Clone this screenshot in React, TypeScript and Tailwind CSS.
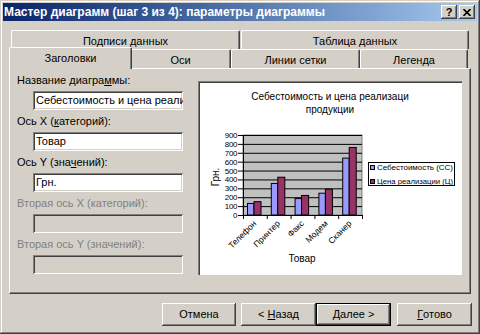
import React from 'react';

const raised =
  'bg-[#D4D0C8] shadow-[inset_-1px_-1px_0_#404040,inset_1px_1px_0_#ffffff,inset_-2px_-2px_0_#808080,inset_2px_2px_0_#D4D0C8]';
const sunken =
  'shadow-[inset_1px_1px_0_#808080,inset_-1px_-1px_0_#ffffff,inset_2px_2px_0_#404040,inset_-2px_-2px_0_#D4D0C8]';

function Tab({ w, label, selected }: { w: string; label: string; selected?: boolean }) {
  return (
    <div
      className={
        w +
        ' flex items-center justify-center border-l border-t border-white border-r border-r-[#404040] rounded-t-[2px] shadow-[inset_-1px_0_0_#808080] bg-[#D4D0C8] text-[11px] text-black ' +
        (selected ? 'h-[22px] -ml-[2px] -mr-[2px] -mb-[1px] relative z-10 pb-[1px]' : 'h-[19px] pt-[2px]')
      }
    >
      {label}
    </div>
  );
}

function Field({
  label,
  value,
  disabled,
}: {
  label: React.ReactNode;
  value?: string;
  disabled?: boolean;
}) {
  return (
    <div className="flex flex-col mb-[5px]">
      <div className={'h-[13px] leading-[13px] text-[11px] whitespace-nowrap ' + (disabled ? 'text-[#808080]' : 'text-black')}>
        {label}
      </div>
      <div
        className={
          'mt-[4px] ml-[16px] w-[150px] h-[19px] overflow-hidden whitespace-nowrap pl-[3px] text-[11px] leading-[19px] text-black ' +
          sunken +
          (disabled ? ' bg-[#D4D0C8]' : ' bg-white')
        }
      >
        {value}
      </div>
    </div>
  );
}

function Btn({ children, w, def }: { children: React.ReactNode; w: string; def?: boolean }) {
  if (def) {
    return (
      <div className={w + ' h-[23px] border border-black'}>
        <div className={'w-full h-full flex items-center justify-center text-[11px] text-black ' + raised}>{children}</div>
      </div>
    );
  }
  return <div className={w + ' h-[23px] flex items-center justify-center text-[11px] text-black ' + raised}>{children}</div>;
}

const cats = [
  { n: 'Телефон', a: 130, b: 150 },
  { n: 'Принтер', a: 355, b: 425 },
  { n: 'Факс', a: 185, b: 220 },
  { n: 'Модем', a: 245, b: 290 },
  { n: 'Сканер', a: 640, b: 760 },
];

function Chart() {
  const x0 = 243;
  const x1 = 362;
  const y0 = 215;
  const yTop = 135;
  const cw = (x1 - x0) / 5;
  const sy = (v: number) => y0 - (v * (y0 - yTop)) / 900;
  const ticks = [0, 100, 200, 300, 400, 500, 600, 700, 800, 900];
  return (
    <svg
      width={264}
      height={194}
      viewBox="198 81 264 194"
      className="block"
      style={{ fontFamily: "'Liberation Sans', Arial, sans-serif" }}
    >
      <text x={330} y={100} fontSize={10} textAnchor="middle" fill="#000">
        Себестоимость и цена реализаци
      </text>
      <text x={330} y={113} fontSize={10} textAnchor="middle" fill="#000">
        продукции
      </text>
      <rect x={x0} y={yTop} width={x1 - x0} height={y0 - yTop} fill="#C0C0C0" stroke="#808080" strokeWidth={1} />
      {ticks.map((t) => (
        <g key={t}>
          <line x1={x0 - 5} x2={x1} y1={sy(t) + 0.5} y2={sy(t) + 0.5} stroke="#000" strokeWidth={1} />
          <text x={237} y={sy(t) + 3} fontSize={8} textAnchor="end" fill="#000" letterSpacing={-0.4}>
            {t}
          </text>
        </g>
      ))}
      <line x1={x0 + 0.5} x2={x0 + 0.5} y1={yTop} y2={y0 + 1} stroke="#000" strokeWidth={1} />
      {[0, 1, 2, 3, 4, 5].map((i) => (
        <line key={i} x1={x0 + i * cw + 0.5} x2={x0 + i * cw + 0.5} y1={y0} y2={y0 + 4} stroke="#000" strokeWidth={1} />
      ))}
      {cats.map((c, i) => {
        const cx = x0 + i * cw;
        return (
          <g key={c.n}>
            <rect x={cx + 4.5} y={sy(c.a)} width={6.5} height={y0 - sy(c.a)} fill="#9999FF" stroke="#000" strokeWidth={1} />
            <rect x={cx + 11} y={sy(c.b)} width={7} height={y0 - sy(c.b)} fill="#993366" stroke="#000" strokeWidth={1} />
            <text
              transform={`translate(${cx + cw / 2 + 2} ${y0 + 9}) rotate(-45)`}
              fontSize={8.5}
              textAnchor="end"
              fill="#000"
            >
              {c.n}
            </text>
          </g>
        );
      })}
      <text transform="translate(219 177) rotate(-90)" fontSize={10} textAnchor="middle" fill="#000">
        Грн.
      </text>
      <text x={302} y={262} fontSize={10} textAnchor="middle" fill="#000">
        Товар
      </text>
      <rect x={368.5} y={162.5} width={86} height={23} fill="#fff" stroke="#000" strokeWidth={1} />
      <rect x={370.5} y={165.5} width={4} height={4} fill="#9999FF" stroke="#000" strokeWidth={1} />
      <rect x={370.5} y={179.5} width={4} height={4} fill="#993366" stroke="#000" strokeWidth={1} />
      <text x={377} y={170} fontSize={8} fill="#000" textLength={76} lengthAdjust="spacingAndGlyphs">
        Себестоимость (СС)
      </text>
      <text x={377} y={184} fontSize={8} fill="#000" textLength={76} lengthAdjust="spacingAndGlyphs">
        Цена реализации (Ц)
      </text>
    </svg>
  );
}

export default function App() {
  return (
    <div className="w-[480px] h-[334px] bg-[#D4D0C8] p-[3px] flex flex-col [font-family:'Liberation_Sans',Arial,sans-serif] shadow-[inset_-1px_-1px_0_#404040,inset_1px_1px_0_#D4D0C8,inset_-2px_-2px_0_#808080,inset_2px_2px_0_#ffffff] overflow-hidden">
      {/* Title bar */}
      <div className="h-[18px] flex items-center bg-linear-to-r from-[#0A246A] to-[#A6CAF0] pl-[1px] pr-[2px]">
        <div className="flex-1 text-white font-bold text-[12px] leading-[18px] whitespace-nowrap">
          Мастер диаграмм (шаг 3 из 4): параметры диаграммы
        </div>
        <div className={'w-[16px] h-[14px] flex items-center justify-center text-[11px] font-bold text-black leading-none ' + raised}>
          ?
        </div>
        <div className={'ml-[2px] w-[16px] h-[14px] flex items-center justify-center ' + raised}>
          <svg width="8" height="7" viewBox="0 0 8 7">
            <path d="M0.5 0 L7.5 7 M7.5 0 L0.5 7" stroke="#000" strokeWidth="1.6" />
          </svg>
        </div>
      </div>

      {/* Tabs back row */}
      <div className="mt-[9px] h-[19px] flex pl-[8px] gap-[1px]">
        <Tab w="w-[229px]" label="Подписи данных" />
        <Tab w="w-[228px]" label="Таблица данных" />
      </div>
      {/* Tabs front row */}
      <div className="h-[19px] flex items-end pl-[8px]">
        <Tab w="w-[123px]" label="Заголовки" selected />
        <Tab w="w-[101px]" label="Оси" />
        <Tab w="w-[129px]" label="Линии сетки" />
        <Tab w="w-[108px]" label="Легенда" />
      </div>

      {/* Panel */}
      <div className="ml-[6px] w-[462px] h-[226px] flex border-l border-t border-white border-r border-b border-r-[#404040] border-b-[#404040] shadow-[inset_-1px_-1px_0_#808080]">
        <div className="w-[173px] pl-[7px] pt-[5px] flex flex-col">
          <Field
            label={
              <>
                Название диагра<span className="underline">м</span>мы:
              </>
            }
            value="Себестоимость и цена реализаци продукции"
          />
          <Field
            label={
              <>
                Ось X (<span className="underline">к</span>атегорий):
              </>
            }
            value="Товар"
          />
          <Field
            label={
              <>
                Ось Y (зна<span className="underline">ч</span>ений):
              </>
            }
            value="Грн."
          />
          <Field label="Вторая ось X (категорий):" disabled />
          <Field label="Вторая ось Y (значений):" disabled />
        </div>
        <div className="ml-[15px] mt-[12px] w-[264px] h-[194px] bg-white relative">
          <Chart />
          <div className="absolute inset-0 pointer-events-none shadow-[inset_1px_1px_0_#808080,inset_2px_2px_0_#404040]" />
        </div>
      </div>

      {/* Buttons */}
      <div className="mt-[9px] flex justify-end pr-[5px]">
        <Btn w="w-[74px]">Отмена</Btn>
        <div className="w-[5px]" />
        <Btn w="w-[75px]">
          &lt; <span className="underline ml-[3px]">Н</span>азад
        </Btn>
        <Btn w="w-[75px]" def>
          <span className="underline">Д</span>алее &gt;
        </Btn>
        <div className="w-[6px]" />
        <Btn w="w-[75px]">
          <span className="underline">Г</span>отово
        </Btn>
      </div>
    </div>
  );
}
